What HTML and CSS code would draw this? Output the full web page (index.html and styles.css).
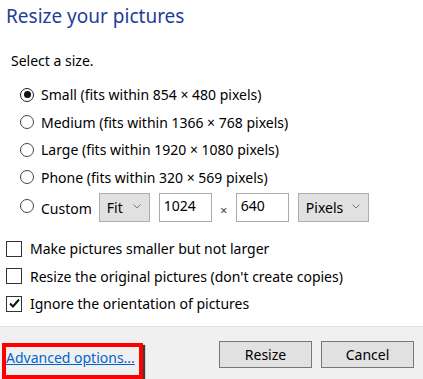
FILE: index.html
```html
<!DOCTYPE html>
<html>
<head>
    <title>Resize your pictures</title>
    <link rel="stylesheet" href="styles.css">
</head>
<body>
    <div class="dialog">
        <div class="content">
            <h1 class="title">Resize your pictures</h1>
            <div class="prompt">Select a size.</div>
            <div class="sizes">
                <div class="opt"><span class="radio checked"></span>Small (fits within 854 × 480 pixels)</div>
                <div class="opt"><span class="radio"></span>Medium (fits within 1366 × 768 pixels)</div>
                <div class="opt"><span class="radio"></span>Large (fits within 1920 × 1080 pixels)</div>
                <div class="opt"><span class="radio"></span>Phone (fits within 320 × 569 pixels)</div>
                <div class="opt custom">
                    <span class="radio"></span><span class="custom-label">Custom</span>
                    <span class="select fit">Fit<svg class="chev" width="8" height="5" viewBox="0 0 8 5"><polyline points="0.5,0.5 4,4 7.5,0.5" fill="none" stroke="#777" stroke-width="1"/></svg></span>
                    <span class="field">1024</span>
                    <span class="times">×</span>
                    <span class="field">640</span>
                    <span class="select units">Pixels<svg class="chev" width="8" height="5" viewBox="0 0 8 5"><polyline points="0.5,0.5 4,4 7.5,0.5" fill="none" stroke="#777" stroke-width="1"/></svg></span>
                </div>
            </div>
            <div class="checks">
                <div class="opt"><span class="box"></span>Make pictures smaller but not larger</div>
                <div class="opt"><span class="box"></span>Resize the original pictures (don't create copies)</div>
                <div class="opt"><span class="box"><svg width="13" height="13" viewBox="0 0 13 13"><polyline points="2,6.5 5,9.5 11,2.5" fill="none" stroke="#111" stroke-width="2"/></svg></span>Ignore the orientation of pictures</div>
            </div>
        </div>
        <div class="footer">
            <a class="advanced" href="#">Advanced options...</a>
            <span class="callout"></span>
            <div class="buttons">
                <button>Resize</button>
                <button>Cancel</button>
            </div>
        </div>
    </div>
</body>
</html>
```

FILE: styles.css
```css
body{
    margin: 0;
    background: #fff;
    font-family: "Noto Sans", "Open Sans", sans-serif;
    font-size: 14px;
    color: #000;
}
.dialog{
    width: 423px;
    height: 379px;
    display: flex;
    flex-direction: column;
    overflow: hidden;
}
.content{
    height: 326px;
    box-sizing: border-box;
    padding: 0 0 0 6px;
}
.title{
    margin: 0;
    padding-top: 3px;
    font-size: 19px;
    font-weight: normal;
    line-height: 26px;
    color: #1f3d99;
}
.prompt{
    margin-top: 22px;
    padding-left: 5px;
    line-height: 20px;
}
.sizes{
    margin-top: 10px;
    padding-left: 14px;
}
.opt{
    display: flex;
    align-items: center;
    height: 27.5px;
    white-space: nowrap;
}
.radio{
    width: 14px;
    height: 14px;
    border: 1px solid #444;
    border-radius: 50%;
    box-sizing: border-box;
    margin-right: 7px;
    display: flex;
    align-items: center;
    justify-content: center;
    flex: none;
}
.radio.checked{
    border-color: #222;
}
.radio.checked::after{
    content: "";
    width: 7px;
    height: 7px;
    border-radius: 50%;
    background: #111;
}
.custom{
    height: 30px;
    margin-top: 1px;
}
.custom .radio{
    margin-top: -3px;
}
.custom-label{
    margin-top: 3px;
}
.select{
    display: flex;
    align-items: center;
    justify-content: space-between;
    box-sizing: border-box;
    height: 29px;
    padding: 0 8px 0 7px;
    background: #e1e1e1;
    border: 1px solid #adadad;
}
.chev{
    margin-top: -2px;
}
.fit{
    width: 51px;
    margin-left: 7px;
}
.units{
    width: 71px;
}
.field{
    box-sizing: border-box;
    width: 53px;
    height: 29px;
    padding: 1px 0 0 4px;
    line-height: 22px;
    border: 1px solid #aaa;
    background: #fff;
}
.fit + .field{
    margin-left: 9px;
}
.times{
    width: 24px;
    text-align: center;
    color: #444;
    font-size: 13px;
    margin-top: 6px;
}
.units{
    margin-left: 9px;
}
.checks{
    margin-top: 13px;
}
.box{
    width: 16px;
    height: 16px;
    border: 1px solid #333;
    box-sizing: border-box;
    margin-right: 8px;
    display: flex;
    align-items: center;
    justify-content: center;
    flex: none;
}
.footer{
    position: relative;
    flex: 1;
    background: #f0f0f0;
    border-top: 1px solid #dfdfdf;
    display: flex;
    align-items: flex-start;
    justify-content: space-between;
}
.advanced{
    margin: 22px 0 0 6px;
    color: #0066cc;
    text-decoration: underline;
    line-height: 18px;
}
.callout{
    position: absolute;
    left: 2px;
    top: 16px;
    width: 141px;
    height: 36px;
    box-sizing: border-box;
    border: 4px solid #ff0000;
    box-shadow: 2px 2px 1px rgba(0, 0, 0, 0.75);
}
.buttons{
    display: flex;
    gap: 9px;
    margin: 14px 9px 0 0;
}
button{
    width: 93px;
    height: 27px;
    font-family: inherit;
    font-size: 14px;
    color: #000;
    background: #e1e1e1;
    border: 1px solid #777;
    padding: 0;
}
```
